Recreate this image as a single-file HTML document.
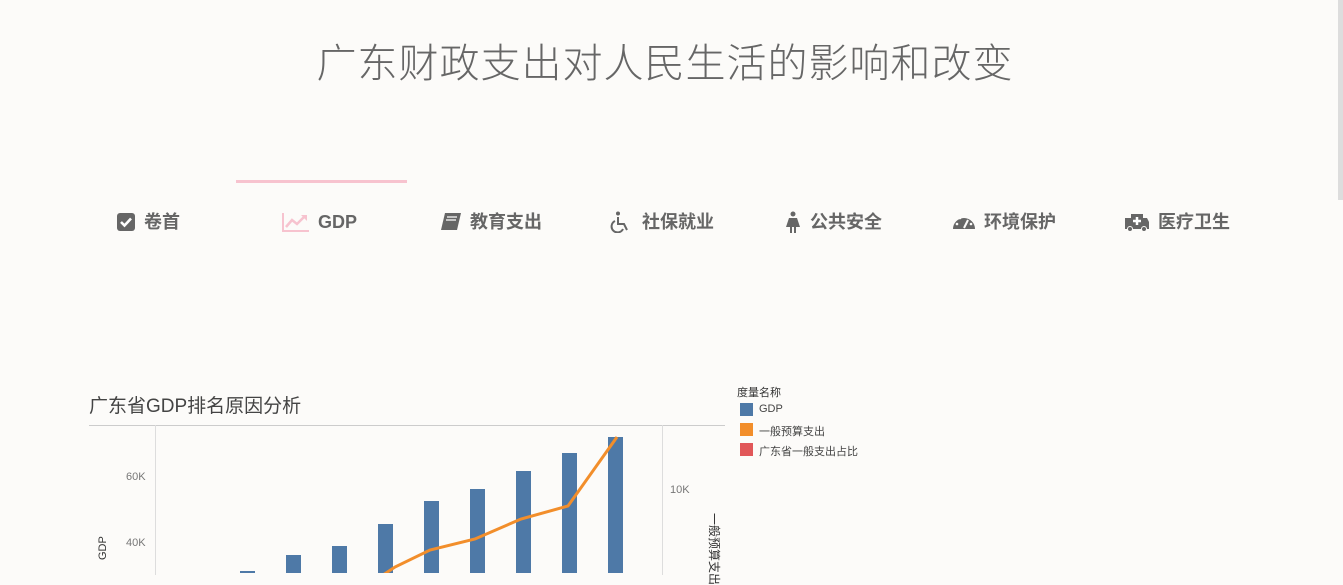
<!DOCTYPE html>
<html><head><meta charset="utf-8"><style>
body{margin:0;width:1343px;height:573px;background:#fcfbf9;overflow:hidden;position:relative;font-family:"Liberation Sans","Noto Sans CJK SC",sans-serif;}
.t{position:absolute;top:31px;left:0;width:1330px;text-align:center;font-size:40px;color:#666;font-weight:300;letter-spacing:1px}
.nav{position:absolute;top:207px;font-size:18px;font-weight:bold;color:#666;height:30px;line-height:30px;display:flex;align-items:center;gap:8px}
.a{position:absolute;font-size:11px;color:#777;white-space:nowrap}
.bar{position:absolute;width:15px;background:#4e79a7;bottom:0}
</style></head><body>
<div style="position:absolute;right:0;top:0;width:5px;height:200px;background:#ddd"></div>
<div class="t">广东财政支出对人民生活的影响和改变</div>
<div style="position:absolute;left:236px;top:180px;width:171px;height:3px;background:#f7c3cf"></div>
<div class="nav" style="left:116px"><svg width="20" height="20" viewBox="0 0 20 20"><rect x="1" y="1" width="18" height="18" rx="3" fill="#666"/><path d="M5 10l3.5 3.5L15 6.5" stroke="#fff" stroke-width="2.6" fill="none"/></svg>卷首</div>
<div class="nav" style="left:282px"><svg width="28" height="20" viewBox="0 0 28 20"><path d="M1 1v18h26" stroke="#f7c3cf" stroke-width="2" fill="none"/><path d="M4 15l6-7 5 4 8-8" stroke="#f7c3cf" stroke-width="2.5" fill="none"/><path d="M19 3h6v6z" fill="#f7c3cf"/></svg>GDP</div>
<div class="nav" style="left:440px"><svg width="22" height="20" viewBox="0 0 22 20"><path d="M5 1h16l-4 17H1z" fill="#666"/><path d="M7 5h10M6 8h10" stroke="#fff" stroke-width="1.2"/></svg>教育支出</div>
<div class="nav" style="left:610px"><svg width="24" height="22" viewBox="0 0 24 22"><circle cx="8" cy="2.5" r="2" fill="#666"/><path d="M8 6v7h6l3 6M5 10a6 6 0 1 0 8 8" stroke="#666" stroke-width="2" fill="none"/></svg>社保就业</div>
<div class="nav" style="left:784px"><svg width="18" height="22" viewBox="0 0 18 22"><circle cx="9" cy="3" r="2.5" fill="#666"/><path d="M5 7h8l3 9H2zM6 15h2v7H6zM10 15h2v7h-2z" fill="#666"/></svg>公共安全</div>
<div class="nav" style="left:952px"><svg width="24" height="20" viewBox="0 0 24 20"><path d="M1 17A11 11 0 1 1 23 17z" fill="#666"/><path d="M12 16l4-8" stroke="#fcfbf9" stroke-width="2"/><circle cx="5" cy="12" r="1.3" fill="#fcfbf9"/><circle cx="8" cy="6" r="1.3" fill="#fcfbf9"/><circle cx="19" cy="12" r="1.3" fill="#fcfbf9"/></svg>环境保护</div>
<div class="nav" style="left:1124px"><svg width="26" height="20" viewBox="0 0 26 20"><path d="M1 6h6V2h12v4h4l2 4v7H1z" fill="#666"/><path d="M13 5v8M9 9h8" stroke="#fff" stroke-width="2.5"/><circle cx="6" cy="17" r="2.5" fill="#666" stroke="#fcfbf9"/><circle cx="20" cy="17" r="2.5" fill="#666" stroke="#fcfbf9"/></svg>医疗卫生</div>
<div style="position:absolute;left:89px;top:391px;font-size:19px;color:#444">广东省GDP排名原因分析</div>
<div style="position:absolute;left:89px;top:425px;width:636px;height:1px;background:#ccc"></div>
<div style="position:absolute;left:155px;top:425px;width:1px;height:150px;background:#ddd"></div>
<div style="position:absolute;left:662px;top:425px;width:1px;height:150px;background:#ddd"></div>
<div class="a" style="left:126px;top:471px">60K</div>
<div class="a" style="left:126px;top:537px">40K</div>
<div class="a" style="left:670px;top:484px">10K</div>
<div class="a" style="left:97px;top:560px;transform:rotate(-90deg);transform-origin:left top;color:#333">GDP</div>
<div class="a" style="left:706px;top:513px;writing-mode:vertical-rl;text-orientation:sideways;color:#333;font-size:12px">一般预算支出</div>
<div class="bar" style="left:240px;height:2px"></div>
<div class="bar" style="left:286px;height:18px"></div>
<div class="bar" style="left:332px;height:27px"></div>
<div class="bar" style="left:378px;height:49px"></div>
<div class="bar" style="left:424px;height:72px"></div>
<div class="bar" style="left:470px;height:84px"></div>
<div class="bar" style="left:516px;height:102px"></div>
<div class="bar" style="left:562px;height:120px"></div>
<div class="bar" style="left:608px;height:136px"></div>
<svg style="position:absolute;left:0;top:0" width="1343" height="573"><polyline points="383,575 395,567 430,550 475,539 521,519 568,506 617,437" fill="none" stroke="#f28e2b" stroke-width="3"/></svg>
<div style="position:absolute;left:737px;top:384px;font-size:11px;color:#333">度量名称</div>
<div style="position:absolute;left:740px;top:403px;width:13px;height:13px;background:#4e79a7"></div><div class="a" style="left:759px;top:403px;color:#444">GDP</div>
<div style="position:absolute;left:740px;top:423px;width:13px;height:13px;background:#f28e2b"></div><div class="a" style="left:759px;top:423px;color:#444">一般预算支出</div>
<div style="position:absolute;left:740px;top:443px;width:13px;height:13px;background:#e15759"></div><div class="a" style="left:759px;top:443px;color:#444">广东省一般支出占比</div>
</body></html>
